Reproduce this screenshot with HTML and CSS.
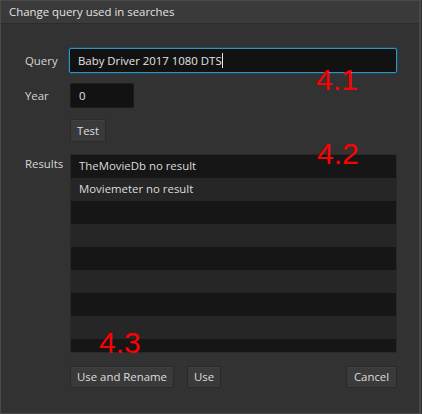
FILE: index.html
```html
<!DOCTYPE html>
<html>
<head>
<meta charset="utf-8">
<link rel="stylesheet" href="styles.css">
</head>
<body>
<div class="window">
  <div class="titlebar">Change query used in searches</div>
  <div class="content">
    <div class="form">
      <label class="label">Query</label>
      <div class="input query">Baby Driver 2017 1080 DTS<span class="caret"></span></div>
      <label class="label">Year</label>
      <div class="input year">0</div>
      <span></span>
      <div class="btnrow"><button class="btn test">Test</button></div>
      <label class="label results-label">Results</label>
      <div class="list">
        <div class="row">TheMovieDb no result</div>
        <div class="row">Moviemeter no result</div>
        <div class="row"></div>
        <div class="row"></div>
        <div class="row"></div>
        <div class="row"></div>
        <div class="row"></div>
        <div class="row"></div>
        <div class="row"></div>
      </div>
      <span></span>
      <div class="actions">
        <button class="btn rename">Use and Rename</button>
        <button class="btn use">Use</button>
        <button class="btn cancel">Cancel</button>
      </div>
    </div>
  </div>
  <div class="note n1">4.1</div>
  <div class="note n2">4.2</div>
  <div class="note n3">4.3</div>
</div>
</body>
</html>
```
FILE: styles.css
```css
* { box-sizing: border-box; }
html, body { margin: 0; padding: 0; background: #333333; }
body {
  width: 422px;
  height: 414px;
  overflow: hidden;
  font-family: "Open Sans", "Noto Sans", sans-serif;
  font-size: 11.4px;
  color: #d6d6d6;
}
.window {
  position: relative;
  width: 421px;
  height: 414px;
  background: #323232;
  border: 1px solid #4a4a4a;
  border-right: 2px solid #484848;
}
.titlebar {
  height: 23px;
  background: #3a3a3a;
  border-bottom: 1px solid #2c2c2c;
  padding-left: 8px;
  line-height: 22px;
  font-size: 11.4px;
  color: #e2e2e2;
}
.content {
  padding: 24px 0 0 24px;
}
.form {
  display: grid;
  grid-template-columns: 44px 328px;
  row-gap: 10px;
  align-items: center;
}
.label {
  color: #d6d6d6;
}
.input {
  height: 25px;
  background: #121212;
  border-radius: 2px;
  padding-left: 8px;
  line-height: 25px;
  color: #e4e4e4;
  white-space: nowrap;
}
.query {
  border: 1px solid #3f8fb4;
  box-shadow: 0 0 0 1px #1b4a60, 0 0 2px 1px #143a4c;
  line-height: 23px;
  padding-left: 8px;
  width: 328px;
}
.caret {
  display: inline-block;
  width: 1px;
  height: 15px;
  background: #e8e8e8;
  vertical-align: -3px;
}
.year {
  width: 64px;
  margin-left: 1px;
  border: 1px solid #1c1c1c;
  line-height: 23px;
}
.btnrow { margin-top: 1px; }
.btn {
  font-family: "Open Sans", "Noto Sans", sans-serif;
  font-size: 11.4px;
  color: #dedede;
  background: #3a3a3a;
  border: 1px solid #2a2a2a;
  box-shadow: inset 0 1px 0 #404040;
  border-radius: 2px;
  padding: 0;
  margin: 0;
  height: 23px;
  line-height: 20px;
}
.test { width: 36px; margin-left: 1px; }
.results-label {
  align-self: start;
  padding-top: 4px;
}
.list {
  margin-top: 2px;
  margin-left: 1px;
  width: 327px;
  height: 199px;
  overflow: hidden;
  border: 1px solid #2a2a2a;
  background: #161616;
}
.row {
  height: 23px;
  line-height: 22px;
  padding-left: 8px;
  color: #dcdcdc;
  background: #161616;
}
.row:nth-child(even) { background: #262626; }
.actions {
  display: flex;
  margin-top: 3px;
  margin-left: 1px;
  width: 327px;
}
.actions .btn { height: 22px; }
.rename { width: 104px; }
.use { width: 34px; margin-left: 13px; }
.cancel { width: 51px; margin-left: auto; }
.note {
  position: absolute;
  font-family: "Liberation Sans", Arial, sans-serif;
  font-size: 30px;
  line-height: 30px;
  color: #ff0000;
}
.n1 { left: 315px; top: 64px; }
.n2 { left: 316px; top: 138px; }
.n3 { left: 98px; top: 327px; }
```
